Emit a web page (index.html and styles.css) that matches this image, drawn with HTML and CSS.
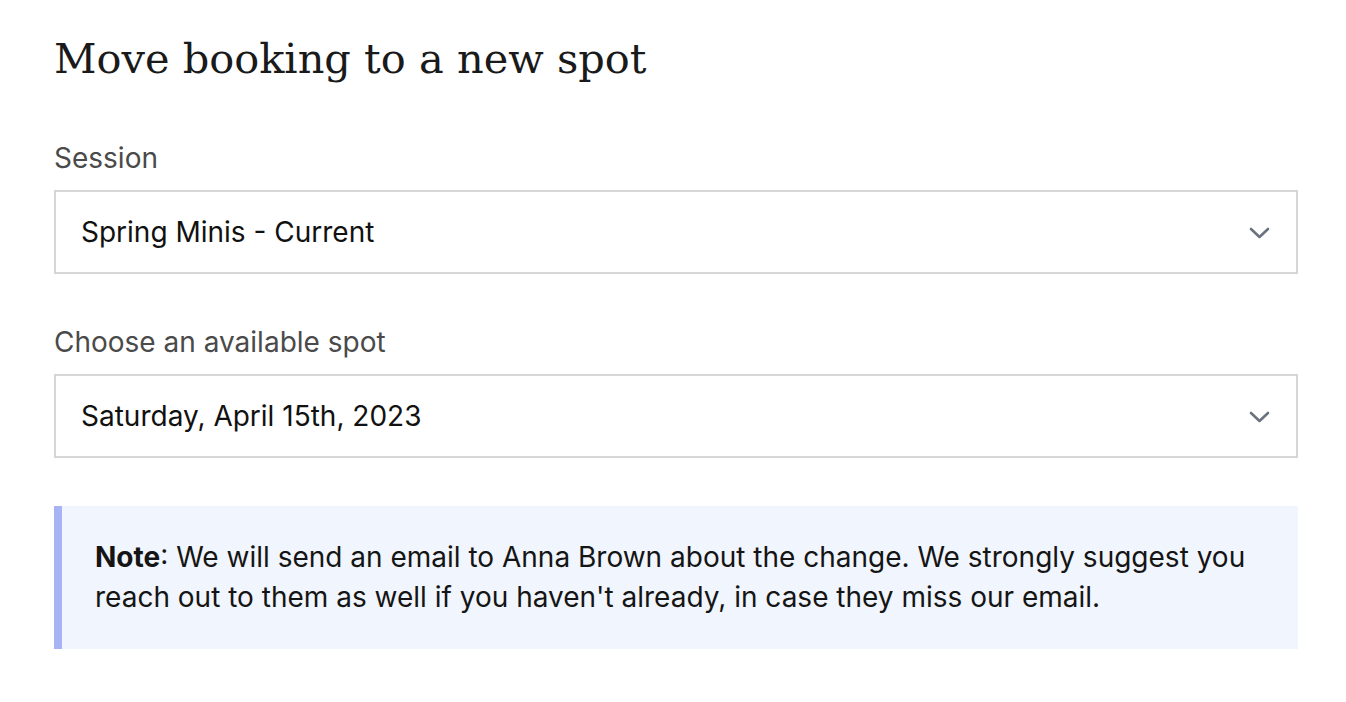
FILE: index.html
```html
<!DOCTYPE html>
<html lang="en">
<head>
    <meta charset="UTF-8">
    <meta name="viewport" content="width=device-width, initial-scale=1.0">
    <title>Move booking</title>
    <link rel="stylesheet" href="styles.css">
</head>
<body>
    <div class="page">
        <h1>Move booking to a new spot</h1>

        <div class="field">
            <label class="label">Session</label>
            <div class="select">
                <span>Spring Minis - Current</span>
                <svg class="chevron" width="21" height="14" viewBox="0 0 21 14"><path d="M2 3l8.5 8 8.5-8" fill="none" stroke="#6b7280" stroke-width="2.6" stroke-linecap="round" stroke-linejoin="round"/></svg>
            </div>
        </div>

        <div class="field">
            <label class="label">Choose an available spot</label>
            <div class="select">
                <span>Saturday, April 15th, 2023</span>
                <svg class="chevron" width="21" height="14" viewBox="0 0 21 14"><path d="M2 3l8.5 8 8.5-8" fill="none" stroke="#6b7280" stroke-width="2.6" stroke-linecap="round" stroke-linejoin="round"/></svg>
            </div>
        </div>

        <div class="note">
            <p><b>Note</b>: We will send an email to Anna Brown about the change. We strongly suggest you reach out to them as well if you haven't already, in case they miss our email.</p>
        </div>
    </div>
</body>
</html>
```

FILE: styles.css
```css
body { margin: 0; background: #fff; font-family: Inter, "Noto Sans", sans-serif; color: #111; }
.page { padding: 34px 48px 0 54px; }
h1 { font-family: "DejaVu Serif", Georgia, serif; font-weight: 400; font-size: 41.5px; line-height: 50px; margin: 0 0 57px; color: #1a1a1a; }
.field + .field { margin-top: 51px; }
.label { display: block; font-size: 28px; line-height: 34px; color: #4a4a4a; margin-bottom: 15px; }
.select { display: flex; align-items: center; justify-content: space-between; height: 80px; border: 2px solid #d6d6d6; padding: 0 26px 0 25px; font-size: 28px; color: #111; }
.chevron { margin-top: 1px; }
.note { margin-top: 48px; background: #f1f5fd; border-left: 8px solid #a8b3f6; padding: 31px 30px 32px 33px; }
.note p { margin: 0; font-size: 28px; line-height: 40px; color: #151515; }
```
